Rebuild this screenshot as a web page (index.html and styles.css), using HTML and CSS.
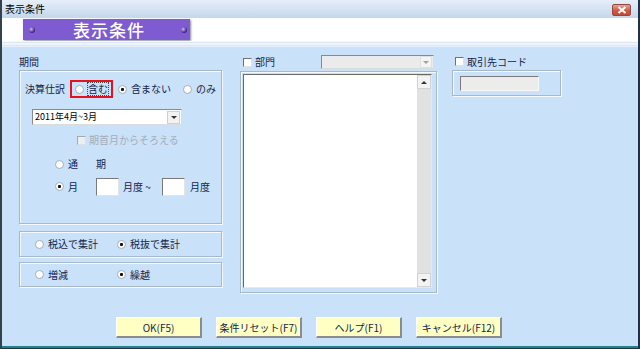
FILE: index.html
```html
<!DOCTYPE html>
<html lang="ja">
<head>
<meta charset="utf-8">
<link rel="stylesheet" href="styles.css">
</head>
<body>
<div class="window">
  <div class="titlebar">
    <span class="title">表示条件</span>
    <span class="close"><svg width="10" height="8" viewBox="0 0 10 8"><path d="M1.5 1 L8.5 7 M8.5 1 L1.5 7" stroke="#fff" stroke-width="2"/></svg></span>
  </div>
  <div class="header">
    <div class="banner"><span class="ball"></span><span class="banner-text">表示条件</span><span class="ball"></span></div>
  </div>
  <div class="stripe"></div>
  <div class="main">
    <div class="columns">
      <div class="col-left">
        <div class="head-left">期間</div>
        <div class="group g1">
          <div class="row r1">
            <span class="lbl">決算仕訳</span>
            <span class="redbox"><span class="radio"></span><span class="focus">含む</span></span>
            <span class="radio on"></span><span class="txt w-fuku">含まない</span>
            <span class="radio"></span><span class="txt">のみ</span>
          </div>
          <div class="combo period"><span class="combo-text">2011年4月~3月</span><span class="arrow-btn"><span class="tri down"></span></span></div>
          <div class="row r3"><span class="check dis"></span><span class="txt dim">期首月からそろえる</span></div>
          <div class="row r4"><span class="radio"></span><span class="txt w-tsu">通</span><span class="txt">期</span></div>
          <div class="row r5"><span class="radio on"></span><span class="txt w-tsu">月</span><span class="tbox m1"></span><span class="txt w-do">月度 ~</span><span class="tbox m2"></span><span class="txt">月度</span></div>
        </div>
        <div class="group g2">
          <span class="opt"><span class="radio"></span><span class="txt">税込で集計</span></span>
          <span class="opt"><span class="radio on"></span><span class="txt">税抜で集計</span></span>
        </div>
        <div class="group g3">
          <span class="opt"><span class="radio"></span><span class="txt">増減</span></span>
          <span class="opt"><span class="radio on"></span><span class="txt">繰越</span></span>
        </div>
      </div>
      <div class="col-mid">
        <div class="head-mid">
          <span class="check"></span><span class="txt">部門</span>
          <div class="combo dept"><span class="combo-text"></span><span class="arrow-btn"><span class="tri down light"></span></span></div>
        </div>
        <div class="listframe">
          <div class="list">
            <div class="list-body"></div>
            <div class="vscroll">
              <span class="sbtn"><span class="tri up"></span></span>
              <span class="track"></span>
              <span class="sbtn"><span class="tri down"></span></span>
            </div>
          </div>
        </div>
      </div>
      <div class="col-right">
        <div class="head-right"><span class="check"></span><span class="txt">取引先コード</span></div>
        <div class="codeframe"><div class="codebox"></div></div>
      </div>
    </div>
    <div class="buttons">
      <button class="btn">OK(F5)</button>
      <button class="btn">条件リセット(F7)</button>
      <button class="btn">ヘルプ(F1)</button>
      <button class="btn">キャンセル(F12)</button>
    </div>
  </div>
</div>
</body>
</html>
```

FILE: styles.css
```css
* { box-sizing: border-box; }
html, body { margin: 0; padding: 0; }
body {
  width: 640px; height: 349px; overflow: hidden;
  font-family: "Noto Sans CJK JP", "Noto Sans", sans-serif;
  font-size: 10px; color: #14244a;
}
.window {
  width: 640px; height: 349px;
  display: flex; flex-direction: column;
  border-left: 2px solid #34414f;
  border-right: 2px solid #1f3148;
  border-bottom: 1px solid #1d3444;
  background: #c9e1f9;
}
.titlebar {
  height: 18px; flex: none;
  display: flex; align-items: center; justify-content: space-between;
  background: linear-gradient(#e6eef8, #c5d7ec);
  padding: 0 7px 0 3px;
}
.title { font-size: 10px; color: #000; line-height: 12px; }
.close {
  width: 19px; height: 12px; margin-top: 1px;
  border: 1px solid #8c4a44; border-radius: 2px;
  background: linear-gradient(#eba391, #cf5a46 55%, #c44a38);
  display: flex; align-items: center; justify-content: center;
}
.header { height: 23px; flex: none; background: #fff; padding: 1px 0 0 21px; }
.banner {
  width: 167px; height: 21px;
  background: #7e5bd0;
  box-shadow: 1px 1px 2px #8a8a9a;
  display: flex; align-items: center; justify-content: space-between;
  padding: 0 3px 0 6px;
}
.ball {
  width: 6px; height: 6px; border-radius: 50%;
  background: radial-gradient(circle at 35% 35%, #c9b6f0, #3a1f80 70%);
}
.banner-text { color: #fff; font-size: 17px; line-height: 20px; font-weight: 500; letter-spacing: 1px; margin-left: 2px; }
.stripe {
  height: 6px; flex: none;
  background: linear-gradient(#f3f8fd 0, #f3f8fd 1px, #dbe8f5 1px, #dbe8f5 2px, #eef5fc 2px, #eef5fc 4px, #d9e7f6 4px, #d9e7f6 5px, #e8f1fb 5px);
}
.main {
  flex: 1; display: flex; flex-direction: column;
  padding: 0 0 8px 17px;
  border-bottom: 2px solid #23808f;
}
.columns { display: flex; align-items: flex-start; }

.txt, .lbl, .focus { line-height: 12px; white-space: nowrap; }
.radio {
  flex: none; position: relative;
  width: 9px; height: 9px; border-radius: 50%;
  background: radial-gradient(circle at 40% 40%, #fff 55%, #e4e8ec);
  border: 1px solid #aab2ba;
  margin-right: 4px;
}
.radio.on::after {
  content: ""; position: absolute; left: 2px; top: 2px;
  width: 3px; height: 3px; background: #111; border-radius: 1px;
}
.check {
  flex: none; width: 9px; height: 9px; background: #fff;
  border-top: 1px solid #707070; border-left: 1px solid #707070;
  border-right: 1px solid #e0e0e0; border-bottom: 1px solid #e0e0e0;
  margin-right: 3px;
}
.check.dis { background: #eceff2; border-color: #a8a8a8 #e0e0e0 #e0e0e0 #a8a8a8; }
.dim { color: #a4adb8; }

.group {
  border: 1px solid #a9b8c7;
  box-shadow: inset 1px 1px 0 #f4f9ff, 1px 1px 0 #f4f9ff;
}
.col-left { width: 203px; flex: none; display: flex; flex-direction: column; }
.head-left { height: 23px; padding: 9px 0 0 0; line-height: 12px; }
.g1 { height: 154px; padding: 9px 0 0 5px; }
.row { display: flex; align-items: center; }
.r1 { height: 18px; }
.lbl { width: 40px; margin-right: 5px; }
.redbox {
  display: flex; align-items: center;
  width: 43px; height: 18px; border: 2px solid #e8101a;
  padding-left: 3px; margin-right: 5px;
}
.focus { outline: 1px dotted #444; outline-offset: 0; }
.w-fuku { width: 52px; }
.combo {
  display: flex; align-items: center; justify-content: space-between;
  background: #fff;
  border-top: 1px solid #8a8a8a; border-left: 1px solid #8a8a8a;
  border-right: 1px solid #dcdcdc; border-bottom: 1px solid #dcdcdc;
}
.period { width: 150px; height: 16px; margin: 11px 0 0 7px; }
.combo-text { padding-left: 2px; font-size: 9px; line-height: 12px; color: #000; }
.arrow-btn {
  width: 13px; height: 13px; margin-right: 1px;
  background: #f2f2f2; border: 1px solid #d0d0d0;
  display: flex; align-items: center; justify-content: center;
}
.tri { width: 0; height: 0; border-left: 3px solid transparent; border-right: 3px solid transparent; }
.tri.down { border-top: 3px solid #333; }
.tri.up { border-bottom: 3px solid #333; }
.tri.light { border-top-color: #a0a0a0; }
.r3 { height: 14px; margin-top: 8px; padding-left: 52px; }
.r4 { height: 14px; margin-top: 10px; padding-left: 30px; }
.w-tsu { width: 28px; }
.r5 { height: 19px; margin-top: 6px; padding-left: 30px; }
.tbox {
  width: 23px; height: 18px; background: #fff;
  border-top: 1px solid #7a7a7a; border-left: 1px solid #7a7a7a;
  border-right: 1px solid #e4e4e4; border-bottom: 1px solid #e4e4e4;
}
.m1 { margin-right: 4px; }
.w-do { width: 39px; }
.m2 { margin-right: 5px; }
.g2, .g3 { display: flex; align-items: center; padding-left: 15px; }
.g2 { height: 26px; margin-top: 7px; }
.g3 { height: 25px; margin-top: 5px; }
.opt { display: flex; align-items: center; width: 82px; }

.col-mid { width: 197px; flex: none; margin-left: 18px; display: flex; flex-direction: column; }
.head-mid { height: 24px; display: flex; align-items: center; padding: 6px 3px 0 3px; }
.dept { width: 113px; height: 14px; margin-left: auto; background: #ebebeb; }
.dept .arrow-btn { width: 12px; height: 12px; border-color: #e0e0e0; background: #f4f4f4; }
.listframe {
  height: 222px;
  border: 1px solid #a9b8c7;
  box-shadow: inset 1px 1px 0 #f4f9ff, 1px 1px 0 #f4f9ff;
  padding: 2px 4px 4px 2px;
}
.list {
  height: 100%; display: flex; background: #fff;
  border-top: 1px solid #6a6a6a; border-left: 1px solid #6a6a6a;
  border-right: 1px solid #e8e8e8; border-bottom: 1px solid #e8e8e8;
}
.list-body { flex: 1; }
.vscroll { width: 14px; display: flex; flex-direction: column; background: #e1e1e1; }
.sbtn {
  width: 14px; height: 14px; flex: none;
  background: #f3f3f3; border: 1px solid #d2d2d2;
  display: flex; align-items: center; justify-content: center;
}
.track { flex: 1; }

.col-right { width: 109px; flex: none; margin-left: 15px; display: flex; flex-direction: column; }
.head-right { height: 23px; display: flex; align-items: center; padding: 6px 0 0 3px; }
.codeframe {
  height: 26px;
  border: 1px solid #a9b8c7;
  box-shadow: inset 1px 1px 0 #f4f9ff, 1px 1px 0 #f4f9ff;
  padding: 5px 0 0 7px;
}
.codebox {
  width: 79px; height: 15px; background: #ececec;
  border-top: 1px solid #7a7a7a; border-left: 1px solid #7a7a7a;
  border-right: 1px solid #f8f8f8; border-bottom: 1px solid #f8f8f8;
}

.buttons { margin-top: auto; display: flex; gap: 14px; padding-left: 97px; }
.btn {
  width: 86px; height: 21px; padding: 0;
  font-family: inherit; font-size: 10px; color: #14244a;
  background: #ffffc4;
  border-top: 1px solid #ffffff; border-left: 1px solid #ffffff;
  border-right: 2px solid #8c8c8c; border-bottom: 2px solid #8c8c8c;
}
```
